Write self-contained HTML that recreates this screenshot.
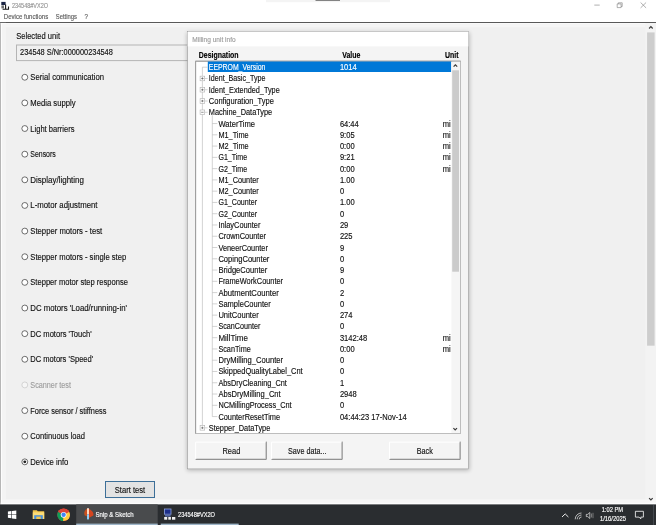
<!DOCTYPE html>
<html><head><meta charset="utf-8"><title>234548#VX2O</title>
<style>
html,body{margin:0;padding:0;}
body{width:656px;height:525px;overflow:hidden;background:#f0f0f0;}
svg{display:block;position:absolute;left:0;top:0;will-change:transform;font-family:"Liberation Sans",sans-serif;}
text{white-space:pre;stroke-width:0.14px}
</style></head><body>
<svg width="656" height="525" viewBox="0 0 656 525">
<rect x="0" y="0" width="656" height="22" fill="#fff"/>
<rect x="266" y="0" width="124" height="2.2" fill="#f4f4f4"/>
<rect x="315.5" y="0" width="24.5" height="0.9" fill="#777"/>
<text x="11.90" y="8" font-size="6.6" fill="#949494" stroke="#949494" textLength="36.10" lengthAdjust="spacingAndGlyphs">234548#VX2O</text>
<text x="3.80" y="19" font-size="6.9" fill="#5a5a5a" stroke="#5a5a5a" textLength="44.40" lengthAdjust="spacingAndGlyphs">Device functions</text>
<text x="55.80" y="19" font-size="6.9" fill="#5a5a5a" stroke="#5a5a5a" textLength="21.20" lengthAdjust="spacingAndGlyphs">Settings</text>
<text x="84.60" y="19" font-size="6.9" fill="#5a5a5a" stroke="#5a5a5a" textLength="3.45" lengthAdjust="spacingAndGlyphs">?</text>
<rect x="0" y="22" width="656" height="1.1" fill="#585858"/>
<rect x="0" y="22" width="0.7" height="482.4" fill="#707070"/>
<rect x="0.7" y="22.9" width="1.3" height="481.5" fill="#fdfdfd"/>
<rect x="2" y="22.9" width="4" height="476.5" fill="#f4f4f4"/>
<rect x="0.7" y="23.1" width="655.3" height="1.2" fill="#fcfcfc"/>
<rect x="2" y="24.3" width="643" height="3" fill="#f5f5f5"/>
<rect x="1.3" y="1.9" width="4.3" height="3.1" fill="#1b2545"/><rect x="1.4" y="5.4" width="2.6" height="3" fill="#6e6e6e"/><path d="M5.6 4.6V9.2M8.5 6.6V9.4M2.6 9.2H9" stroke="#151515" stroke-width="1.1" fill="none"/>
<path d="M594.3 5.1H599.7M617.2 3.9h3.9v3.7h-3.9zM618.3 3.9V2.8h3.9v3.7h-1.1M640.6 2.5L646.1 7.9M646.1 2.5L640.6 7.9" stroke="#7a7a7a" stroke-width="0.6" fill="none"/>
<text x="16.20" y="39" font-size="8.6" fill="#111" stroke="#111" textLength="43.80" lengthAdjust="spacingAndGlyphs">Selected unit</text>
<rect x="16.5" y="45" width="309" height="15.6" fill="#f0f0f0" stroke="#b4b4b4" stroke-width="1"/>
<text x="20.10" y="55" font-size="8.4" fill="#111" stroke="#111" textLength="92.70" lengthAdjust="spacingAndGlyphs">234548 S/Nr:000000234548</text>
<circle cx="24.8" cy="77.25" r="2.95" fill="#fff" stroke="#333" stroke-width="0.7"/>
<text x="30.30" y="80" font-size="8.4" fill="#111" stroke="#111" textLength="73.70" lengthAdjust="spacingAndGlyphs">Serial communication</text>
<circle cx="24.8" cy="102.89" r="2.95" fill="#fff" stroke="#333" stroke-width="0.7"/>
<text x="30.30" y="106" font-size="8.4" fill="#111" stroke="#111" textLength="45.20" lengthAdjust="spacingAndGlyphs">Media supply</text>
<circle cx="24.8" cy="128.53" r="2.95" fill="#fff" stroke="#333" stroke-width="0.7"/>
<text x="30.30" y="132" font-size="8.4" fill="#111" stroke="#111" textLength="44.20" lengthAdjust="spacingAndGlyphs">Light barriers</text>
<circle cx="24.8" cy="154.17" r="2.95" fill="#fff" stroke="#333" stroke-width="0.7"/>
<text x="30.30" y="157" font-size="8.4" fill="#111" stroke="#111" textLength="25.45" lengthAdjust="spacingAndGlyphs">Sensors</text>
<circle cx="24.8" cy="179.81" r="2.95" fill="#fff" stroke="#333" stroke-width="0.7"/>
<text x="30.30" y="183" font-size="8.4" fill="#111" stroke="#111" textLength="53.70" lengthAdjust="spacingAndGlyphs">Display/lighting</text>
<circle cx="24.8" cy="205.45" r="2.95" fill="#fff" stroke="#333" stroke-width="0.7"/>
<text x="30.30" y="208" font-size="8.4" fill="#111" stroke="#111" textLength="67.20" lengthAdjust="spacingAndGlyphs">L-motor adjustment</text>
<circle cx="24.8" cy="231.09" r="2.95" fill="#fff" stroke="#333" stroke-width="0.7"/>
<text x="30.30" y="234" font-size="8.4" fill="#111" stroke="#111" textLength="71.90" lengthAdjust="spacingAndGlyphs">Stepper motors - test</text>
<circle cx="24.8" cy="256.73" r="2.95" fill="#fff" stroke="#333" stroke-width="0.7"/>
<text x="30.30" y="260" font-size="8.4" fill="#111" stroke="#111" textLength="96.00" lengthAdjust="spacingAndGlyphs">Stepper motors - single step</text>
<circle cx="24.8" cy="282.37" r="2.95" fill="#fff" stroke="#333" stroke-width="0.7"/>
<text x="30.30" y="285" font-size="8.4" fill="#111" stroke="#111" textLength="97.70" lengthAdjust="spacingAndGlyphs">Stepper motor step response</text>
<circle cx="24.8" cy="308.01" r="2.95" fill="#fff" stroke="#333" stroke-width="0.7"/>
<text x="30.30" y="311" font-size="8.4" fill="#111" stroke="#111" textLength="96.70" lengthAdjust="spacingAndGlyphs">DC motors 'Load/running-in'</text>
<circle cx="24.8" cy="333.65" r="2.95" fill="#fff" stroke="#333" stroke-width="0.7"/>
<text x="30.30" y="337" font-size="8.4" fill="#111" stroke="#111" textLength="61.40" lengthAdjust="spacingAndGlyphs">DC motors 'Touch'</text>
<circle cx="24.8" cy="359.29" r="2.95" fill="#fff" stroke="#333" stroke-width="0.7"/>
<text x="30.30" y="362" font-size="8.4" fill="#111" stroke="#111" textLength="62.90" lengthAdjust="spacingAndGlyphs">DC motors 'Speed'</text>
<circle cx="24.8" cy="384.93" r="2.95" fill="#f6f6f6" stroke="#c6c6c6" stroke-width="0.7"/>
<text x="30.30" y="388" font-size="8.4" fill="#9d9d9d" stroke="#9d9d9d" textLength="40.70" lengthAdjust="spacingAndGlyphs">Scanner test</text>
<circle cx="24.8" cy="410.57" r="2.95" fill="#fff" stroke="#333" stroke-width="0.7"/>
<text x="30.30" y="414" font-size="8.4" fill="#111" stroke="#111" textLength="76.10" lengthAdjust="spacingAndGlyphs">Force sensor / stiffness</text>
<circle cx="24.8" cy="436.21" r="2.95" fill="#fff" stroke="#333" stroke-width="0.7"/>
<text x="30.30" y="439" font-size="8.4" fill="#111" stroke="#111" textLength="54.70" lengthAdjust="spacingAndGlyphs">Continuous load</text>
<circle cx="24.8" cy="461.85" r="2.95" fill="#fff" stroke="#333" stroke-width="0.7"/>
<circle cx="24.8" cy="461.85" r="1.45" fill="#222"/>
<text x="30.30" y="465" font-size="8.4" fill="#111" stroke="#111" textLength="38.10" lengthAdjust="spacingAndGlyphs">Device info</text>
<rect x="105.5" y="481.5" width="49" height="16" fill="#e3e3e3" stroke="#3d6f98" stroke-width="1"/>
<text x="114.80" y="493" font-size="8.4" fill="#111" stroke="#111" textLength="30.30" lengthAdjust="spacingAndGlyphs">Start test</text>
<rect x="645.5" y="23" width="10.5" height="480" fill="#f3f3f3"/>
<rect x="647.1" y="32.4" width="7.5" height="313.3" fill="#cdcdcd"/>
<rect x="2" y="499.2" width="654" height="3.5" fill="#f6f6f6"/>
<rect x="0.7" y="502.7" width="655.3" height="1.7" fill="#fdfdfd"/>
<path d="M649.1 28.5L650.9 26.7L652.7 28.5M649.1 498.2L650.9 500L652.7 498.2" stroke="#3a3a3a" stroke-width="1.2" fill="none"/>
<defs><filter id="sh" x="-10%" y="-10%" width="120%" height="120%"><feGaussianBlur stdDeviation="1.9"/></filter></defs>
<rect x="187" y="32.5" width="282.5" height="438" fill="#000" opacity="0.24" filter="url(#sh)"/>
<rect x="187.5" y="31.6" width="281" height="437.3" fill="#f4f4f4" stroke="#8c8c8c" stroke-width="0.5"/>
<rect x="187.7" y="31.8" width="280.6" height="14.6" fill="#fff"/>
<text x="192.30" y="42" font-size="6.9" fill="#9c9c9c" stroke="#9c9c9c" textLength="43.30" lengthAdjust="spacingAndGlyphs">Milling unit info</text>
<text x="198.80" y="58" font-size="8.2" fill="#000" stroke="#000" textLength="39.80" lengthAdjust="spacingAndGlyphs" font-weight="bold">Designation</text>
<text x="342.20" y="58" font-size="8.2" fill="#000" stroke="#000" textLength="18.20" lengthAdjust="spacingAndGlyphs" font-weight="bold">Value</text>
<text x="445.10" y="58" font-size="8.2" fill="#000" stroke="#000" textLength="13.50" lengthAdjust="spacingAndGlyphs" font-weight="bold">Unit</text>
<rect x="195.6" y="61.2" width="264.9" height="372.3" fill="#fff" stroke="#bdbdbd" stroke-width="1"/>
<path d="M195.6 433.5V61.2H460.5" fill="none" stroke="#9c9c9c" stroke-width="1"/>
<path d="M202.4 67.20V427.84M212.3 115.28V416.57" stroke="#b6b6b6" stroke-width="0.6" fill="none"/>
<rect x="207.8" y="61.5" width="243.4" height="10.5" fill="#0078d7"/>
<text x="208.80" y="70" font-size="8.2" fill="#fff" stroke="#fff" textLength="56.60" lengthAdjust="spacingAndGlyphs">EEPROM_Version</text>
<text x="339.90" y="70" font-size="8.2" fill="#fff" stroke="#fff" textLength="16.78" lengthAdjust="spacingAndGlyphs">1014</text>
<path d="M202.4 67.20H207.6" stroke="#b6b6b6" stroke-width="0.6"/>
<text x="208.80" y="81" font-size="8.2" fill="#111" stroke="#111" textLength="56.60" lengthAdjust="spacingAndGlyphs">Ident_Basic_Type</text>
<rect x="200.1" y="76.17" width="4.6" height="4.6" fill="#fff" stroke="#b0b0b0" stroke-width="0.6"/>
<path d="M201.2 78.47h2.4M202.4 77.27v2.4" stroke="#4a4a4a" stroke-width="0.6"/>
<path d="M204.9 78.47H207.6" stroke="#b6b6b6" stroke-width="0.6"/>
<text x="208.80" y="93" font-size="8.2" fill="#111" stroke="#111" textLength="70.90" lengthAdjust="spacingAndGlyphs">Ident_Extended_Type</text>
<rect x="200.1" y="87.44" width="4.6" height="4.6" fill="#fff" stroke="#b0b0b0" stroke-width="0.6"/>
<path d="M201.2 89.74h2.4M202.4 88.54v2.4" stroke="#4a4a4a" stroke-width="0.6"/>
<path d="M204.9 89.74H207.6" stroke="#b6b6b6" stroke-width="0.6"/>
<text x="208.80" y="104" font-size="8.2" fill="#111" stroke="#111" textLength="65.10" lengthAdjust="spacingAndGlyphs">Configuration_Type</text>
<rect x="200.1" y="98.71" width="4.6" height="4.6" fill="#fff" stroke="#b0b0b0" stroke-width="0.6"/>
<path d="M201.2 101.01h2.4M202.4 99.81v2.4" stroke="#4a4a4a" stroke-width="0.6"/>
<path d="M204.9 101.01H207.6" stroke="#b6b6b6" stroke-width="0.6"/>
<text x="208.80" y="115" font-size="8.2" fill="#111" stroke="#111" textLength="63.40" lengthAdjust="spacingAndGlyphs">Machine_DataType</text>
<rect x="200.1" y="109.98" width="4.6" height="4.6" fill="#fff" stroke="#b0b0b0" stroke-width="0.6"/>
<path d="M201.2 112.28h2.4" stroke="#4a4a4a" stroke-width="0.6"/>
<path d="M204.9 112.28H207.6" stroke="#b6b6b6" stroke-width="0.6"/>
<text x="218.40" y="127" font-size="8.2" fill="#111" stroke="#111" textLength="36.70" lengthAdjust="spacingAndGlyphs">WaterTime</text>
<text x="339.90" y="127" font-size="8.2" fill="#111" stroke="#111" textLength="18.88" lengthAdjust="spacingAndGlyphs">64:44</text>
<text x="442.70" y="127" font-size="8.2" fill="#111" stroke="#111" textLength="7.96" lengthAdjust="spacingAndGlyphs">mi</text>
<path d="M212.3 123.55H217.3" stroke="#b6b6b6" stroke-width="0.6"/>
<text x="218.40" y="138" font-size="8.2" fill="#111" stroke="#111" textLength="30.30" lengthAdjust="spacingAndGlyphs">M1_Time</text>
<text x="339.90" y="138" font-size="8.2" fill="#111" stroke="#111" textLength="14.68" lengthAdjust="spacingAndGlyphs">9:05</text>
<text x="442.70" y="138" font-size="8.2" fill="#111" stroke="#111" textLength="7.96" lengthAdjust="spacingAndGlyphs">mi</text>
<path d="M212.3 134.82H217.3" stroke="#b6b6b6" stroke-width="0.6"/>
<text x="218.40" y="149" font-size="8.2" fill="#111" stroke="#111" textLength="30.30" lengthAdjust="spacingAndGlyphs">M2_Time</text>
<text x="339.90" y="149" font-size="8.2" fill="#111" stroke="#111" textLength="14.68" lengthAdjust="spacingAndGlyphs">0:00</text>
<text x="442.70" y="149" font-size="8.2" fill="#111" stroke="#111" textLength="7.96" lengthAdjust="spacingAndGlyphs">mi</text>
<path d="M212.3 146.09H217.3" stroke="#b6b6b6" stroke-width="0.6"/>
<text x="218.40" y="160" font-size="8.2" fill="#111" stroke="#111" textLength="28.80" lengthAdjust="spacingAndGlyphs">G1_Time</text>
<text x="339.90" y="160" font-size="8.2" fill="#111" stroke="#111" textLength="14.68" lengthAdjust="spacingAndGlyphs">9:21</text>
<text x="442.70" y="160" font-size="8.2" fill="#111" stroke="#111" textLength="7.96" lengthAdjust="spacingAndGlyphs">mi</text>
<path d="M212.3 157.36H217.3" stroke="#b6b6b6" stroke-width="0.6"/>
<text x="218.40" y="172" font-size="8.2" fill="#111" stroke="#111" textLength="28.80" lengthAdjust="spacingAndGlyphs">G2_Time</text>
<text x="339.90" y="172" font-size="8.2" fill="#111" stroke="#111" textLength="14.68" lengthAdjust="spacingAndGlyphs">0:00</text>
<text x="442.70" y="172" font-size="8.2" fill="#111" stroke="#111" textLength="7.96" lengthAdjust="spacingAndGlyphs">mi</text>
<path d="M212.3 168.63H217.3" stroke="#b6b6b6" stroke-width="0.6"/>
<text x="218.40" y="183" font-size="8.2" fill="#111" stroke="#111" textLength="40.30" lengthAdjust="spacingAndGlyphs">M1_Counter</text>
<text x="339.90" y="183" font-size="8.2" fill="#111" stroke="#111" textLength="14.68" lengthAdjust="spacingAndGlyphs">1.00</text>
<path d="M212.3 179.90H217.3" stroke="#b6b6b6" stroke-width="0.6"/>
<text x="218.40" y="194" font-size="8.2" fill="#111" stroke="#111" textLength="40.30" lengthAdjust="spacingAndGlyphs">M2_Counter</text>
<text x="339.90" y="194" font-size="8.2" fill="#111" stroke="#111" textLength="4.20" lengthAdjust="spacingAndGlyphs">0</text>
<path d="M212.3 191.17H217.3" stroke="#b6b6b6" stroke-width="0.6"/>
<text x="218.40" y="205" font-size="8.2" fill="#111" stroke="#111" textLength="38.60" lengthAdjust="spacingAndGlyphs">G1_Counter</text>
<text x="339.90" y="205" font-size="8.2" fill="#111" stroke="#111" textLength="14.68" lengthAdjust="spacingAndGlyphs">1.00</text>
<path d="M212.3 202.44H217.3" stroke="#b6b6b6" stroke-width="0.6"/>
<text x="218.40" y="217" font-size="8.2" fill="#111" stroke="#111" textLength="38.60" lengthAdjust="spacingAndGlyphs">G2_Counter</text>
<text x="339.90" y="217" font-size="8.2" fill="#111" stroke="#111" textLength="4.20" lengthAdjust="spacingAndGlyphs">0</text>
<path d="M212.3 213.71H217.3" stroke="#b6b6b6" stroke-width="0.6"/>
<text x="218.40" y="228" font-size="8.2" fill="#111" stroke="#111" textLength="42.00" lengthAdjust="spacingAndGlyphs">InlayCounter</text>
<text x="339.90" y="228" font-size="8.2" fill="#111" stroke="#111" textLength="8.39" lengthAdjust="spacingAndGlyphs">29</text>
<path d="M212.3 224.98H217.3" stroke="#b6b6b6" stroke-width="0.6"/>
<text x="218.40" y="239" font-size="8.2" fill="#111" stroke="#111" textLength="47.60" lengthAdjust="spacingAndGlyphs">CrownCounter</text>
<text x="339.90" y="239" font-size="8.2" fill="#111" stroke="#111" textLength="12.59" lengthAdjust="spacingAndGlyphs">225</text>
<path d="M212.3 236.25H217.3" stroke="#b6b6b6" stroke-width="0.6"/>
<text x="218.40" y="251" font-size="8.2" fill="#111" stroke="#111" textLength="49.50" lengthAdjust="spacingAndGlyphs">VeneerCounter</text>
<text x="339.90" y="251" font-size="8.2" fill="#111" stroke="#111" textLength="4.20" lengthAdjust="spacingAndGlyphs">9</text>
<path d="M212.3 247.52H217.3" stroke="#b6b6b6" stroke-width="0.6"/>
<text x="218.40" y="262" font-size="8.2" fill="#111" stroke="#111" textLength="51.00" lengthAdjust="spacingAndGlyphs">CopingCounter</text>
<text x="339.90" y="262" font-size="8.2" fill="#111" stroke="#111" textLength="4.20" lengthAdjust="spacingAndGlyphs">0</text>
<path d="M212.3 258.79H217.3" stroke="#b6b6b6" stroke-width="0.6"/>
<text x="218.40" y="273" font-size="8.2" fill="#111" stroke="#111" textLength="48.90" lengthAdjust="spacingAndGlyphs">BridgeCounter</text>
<text x="339.90" y="273" font-size="8.2" fill="#111" stroke="#111" textLength="4.20" lengthAdjust="spacingAndGlyphs">9</text>
<path d="M212.3 270.06H217.3" stroke="#b6b6b6" stroke-width="0.6"/>
<text x="218.40" y="284" font-size="8.2" fill="#111" stroke="#111" textLength="64.70" lengthAdjust="spacingAndGlyphs">FrameWorkCounter</text>
<text x="339.90" y="284" font-size="8.2" fill="#111" stroke="#111" textLength="4.20" lengthAdjust="spacingAndGlyphs">0</text>
<path d="M212.3 281.33H217.3" stroke="#b6b6b6" stroke-width="0.6"/>
<text x="218.40" y="296" font-size="8.2" fill="#111" stroke="#111" textLength="60.40" lengthAdjust="spacingAndGlyphs">AbutmentCounter</text>
<text x="339.90" y="296" font-size="8.2" fill="#111" stroke="#111" textLength="4.20" lengthAdjust="spacingAndGlyphs">2</text>
<path d="M212.3 292.60H217.3" stroke="#b6b6b6" stroke-width="0.6"/>
<text x="218.40" y="307" font-size="8.2" fill="#111" stroke="#111" textLength="52.30" lengthAdjust="spacingAndGlyphs">SampleCounter</text>
<text x="339.90" y="307" font-size="8.2" fill="#111" stroke="#111" textLength="4.20" lengthAdjust="spacingAndGlyphs">0</text>
<path d="M212.3 303.87H217.3" stroke="#b6b6b6" stroke-width="0.6"/>
<text x="218.40" y="318" font-size="8.2" fill="#111" stroke="#111" textLength="40.30" lengthAdjust="spacingAndGlyphs">UnitCounter</text>
<text x="339.90" y="318" font-size="8.2" fill="#111" stroke="#111" textLength="12.59" lengthAdjust="spacingAndGlyphs">274</text>
<path d="M212.3 315.14H217.3" stroke="#b6b6b6" stroke-width="0.6"/>
<text x="218.40" y="329" font-size="8.2" fill="#111" stroke="#111" textLength="42.00" lengthAdjust="spacingAndGlyphs">ScanCounter</text>
<text x="339.90" y="329" font-size="8.2" fill="#111" stroke="#111" textLength="4.20" lengthAdjust="spacingAndGlyphs">0</text>
<path d="M212.3 326.41H217.3" stroke="#b6b6b6" stroke-width="0.6"/>
<text x="218.40" y="341" font-size="8.2" fill="#111" stroke="#111" textLength="29.50" lengthAdjust="spacingAndGlyphs">MillTime</text>
<text x="339.90" y="341" font-size="8.2" fill="#111" stroke="#111" textLength="27.27" lengthAdjust="spacingAndGlyphs">3142:48</text>
<text x="442.70" y="341" font-size="8.2" fill="#111" stroke="#111" textLength="7.96" lengthAdjust="spacingAndGlyphs">mi</text>
<path d="M212.3 337.68H217.3" stroke="#b6b6b6" stroke-width="0.6"/>
<text x="218.40" y="352" font-size="8.2" fill="#111" stroke="#111" textLength="32.40" lengthAdjust="spacingAndGlyphs">ScanTime</text>
<text x="339.90" y="352" font-size="8.2" fill="#111" stroke="#111" textLength="14.68" lengthAdjust="spacingAndGlyphs">0:00</text>
<text x="442.70" y="352" font-size="8.2" fill="#111" stroke="#111" textLength="7.96" lengthAdjust="spacingAndGlyphs">mi</text>
<path d="M212.3 348.95H217.3" stroke="#b6b6b6" stroke-width="0.6"/>
<text x="218.40" y="363" font-size="8.2" fill="#111" stroke="#111" textLength="64.70" lengthAdjust="spacingAndGlyphs">DryMilling_Counter</text>
<text x="339.90" y="363" font-size="8.2" fill="#111" stroke="#111" textLength="4.20" lengthAdjust="spacingAndGlyphs">0</text>
<path d="M212.3 360.22H217.3" stroke="#b6b6b6" stroke-width="0.6"/>
<text x="218.40" y="374" font-size="8.2" fill="#111" stroke="#111" textLength="84.30" lengthAdjust="spacingAndGlyphs">SkippedQualityLabel_Cnt</text>
<text x="339.90" y="374" font-size="8.2" fill="#111" stroke="#111" textLength="4.20" lengthAdjust="spacingAndGlyphs">0</text>
<path d="M212.3 371.49H217.3" stroke="#b6b6b6" stroke-width="0.6"/>
<text x="218.40" y="386" font-size="8.2" fill="#111" stroke="#111" textLength="68.50" lengthAdjust="spacingAndGlyphs">AbsDryCleaning_Cnt</text>
<text x="339.90" y="386" font-size="8.2" fill="#111" stroke="#111" textLength="4.20" lengthAdjust="spacingAndGlyphs">1</text>
<path d="M212.3 382.76H217.3" stroke="#b6b6b6" stroke-width="0.6"/>
<text x="218.40" y="397" font-size="8.2" fill="#111" stroke="#111" textLength="62.30" lengthAdjust="spacingAndGlyphs">AbsDryMilling_Cnt</text>
<text x="339.90" y="397" font-size="8.2" fill="#111" stroke="#111" textLength="16.78" lengthAdjust="spacingAndGlyphs">2948</text>
<path d="M212.3 394.03H217.3" stroke="#b6b6b6" stroke-width="0.6"/>
<text x="218.40" y="408" font-size="8.2" fill="#111" stroke="#111" textLength="73.20" lengthAdjust="spacingAndGlyphs">NCMillingProcess_Cnt</text>
<text x="339.90" y="408" font-size="8.2" fill="#111" stroke="#111" textLength="4.20" lengthAdjust="spacingAndGlyphs">0</text>
<path d="M212.3 405.30H217.3" stroke="#b6b6b6" stroke-width="0.6"/>
<text x="218.40" y="420" font-size="8.2" fill="#111" stroke="#111" textLength="61.70" lengthAdjust="spacingAndGlyphs">CounterResetTime</text>
<text x="339.90" y="420" font-size="8.2" fill="#111" stroke="#111" textLength="66.69" lengthAdjust="spacingAndGlyphs">04:44:23 17-Nov-14</text>
<path d="M212.3 416.57H217.3" stroke="#b6b6b6" stroke-width="0.6"/>
<text x="208.80" y="431" font-size="8.2" fill="#111" stroke="#111" textLength="61.50" lengthAdjust="spacingAndGlyphs">Stepper_DataType</text>
<rect x="200.1" y="425.54" width="4.6" height="4.6" fill="#fff" stroke="#b0b0b0" stroke-width="0.6"/>
<path d="M201.2 427.84h2.4M202.4 426.64v2.4" stroke="#4a4a4a" stroke-width="0.6"/>
<path d="M204.9 427.84H207.6" stroke="#b6b6b6" stroke-width="0.6"/>
<rect x="451.4" y="61.7" width="8.6" height="371.3" fill="#f5f5f5"/>
<rect x="452.2" y="70.3" width="6.8" height="201.4" fill="#cbcbcb"/>
<path d="M453.6 66.6L455.4 64.8L457.2 66.6M453.4 428.2L455.2 430L457 428.2" stroke="#3a3a3a" stroke-width="1.2" fill="none"/>
<rect x="195.6" y="441.6" width="71.2" height="18.3" fill="#f4f4f4"/>
<path d="M195.6 459.40000000000003V442.1H266.3" stroke="#fff" stroke-width="1" fill="none"/>
<path d="M265.6 442.6V458.70000000000005H196.6" stroke="#d6d6d6" stroke-width="0.7" fill="none"/>
<path d="M266.3 441.6V459.40000000000003H195.6" stroke="#5a5a5a" stroke-width="0.7" fill="none"/>
<text x="222.50" y="454" font-size="8.4" fill="#111" stroke="#111" textLength="17.80" lengthAdjust="spacingAndGlyphs">Read</text>
<rect x="271.5" y="441.6" width="71.2" height="18.3" fill="#f4f4f4"/>
<path d="M271.5 459.40000000000003V442.1H342.2" stroke="#fff" stroke-width="1" fill="none"/>
<path d="M341.5 442.6V458.70000000000005H272.5" stroke="#d6d6d6" stroke-width="0.7" fill="none"/>
<path d="M342.2 441.6V459.40000000000003H271.5" stroke="#5a5a5a" stroke-width="0.7" fill="none"/>
<text x="288.00" y="454" font-size="8.4" fill="#111" stroke="#111" textLength="38.40" lengthAdjust="spacingAndGlyphs">Save data...</text>
<rect x="389.5" y="441.6" width="71.2" height="18.3" fill="#f4f4f4"/>
<path d="M389.5 459.40000000000003V442.1H460.2" stroke="#fff" stroke-width="1" fill="none"/>
<path d="M459.5 442.6V458.70000000000005H390.5" stroke="#d6d6d6" stroke-width="0.7" fill="none"/>
<path d="M460.2 441.6V459.40000000000003H389.5" stroke="#5a5a5a" stroke-width="0.7" fill="none"/>
<text x="416.80" y="454" font-size="8.4" fill="#111" stroke="#111" textLength="16.00" lengthAdjust="spacingAndGlyphs">Back</text>
<rect x="0" y="504.4" width="656" height="20.6" fill="#2a2d30"/>
<rect x="76.2" y="504.4" width="81.5" height="20.6" fill="#494b4d"/>
<rect x="76.2" y="523.6" width="81.5" height="1.4" fill="#9fb6c9"/>
<rect x="160.7" y="523.6" width="78" height="1.4" fill="#9fb6c9"/>
<text x="95.50" y="517" font-size="6.6" fill="#fff" stroke="#fff" textLength="38.20" lengthAdjust="spacingAndGlyphs">Snip &amp; Sketch</text>
<text x="178.00" y="517" font-size="6.6" fill="#fff" stroke="#fff" textLength="37.00" lengthAdjust="spacingAndGlyphs">234548#VX2O</text>
<text x="601.70" y="512" font-size="6.4" fill="#fff" stroke="#fff" textLength="21.30" lengthAdjust="spacingAndGlyphs">1:02 PM</text>
<text x="600.00" y="521" font-size="6.4" fill="#fff" stroke="#fff" textLength="26.00" lengthAdjust="spacingAndGlyphs">1/16/2025</text>
<path d="M7.9 511.6L11.4 511.1V514.4H7.9zM12 511L16.3 510.4V514.4H12zM7.9 515H11.4V518.3L7.9 517.8zM12 515H16.3V519L12 518.4z" fill="#fff"/>
<path d="M32.8 510.2h4l1 1.1h6.4v7.7H32.8z" fill="#f3c64b"/><rect x="32.8" y="512.3" width="11.4" height="6.7" fill="#fbdc78"/><rect x="34.2" y="515.2" width="8.6" height="3.8" fill="#4a90d9"/><rect x="36.3" y="516.6" width="4.4" height="2.4" fill="#f3c64b"/>
<circle cx="63.6" cy="514.8" r="6.3" fill="#db4437"/>
<path d="M63.6 514.8L58.1 511.7A6.3 6.3 0 0 0 63.2 521.1z" fill="#0f9d58"/>
<path d="M63.6 514.8L63.2 521.1A6.3 6.3 0 0 0 69.1 511.7z" fill="#ffcd40"/>
<path d="M63.6 514.8L69.1 511.7A6.3 6.3 0 0 0 58.1 511.7z" fill="#db4437"/>
<circle cx="63.6" cy="514.8" r="2.9" fill="#fff"/><circle cx="63.6" cy="514.8" r="2.2" fill="#4285f4"/>
<path d="M87.3 508.6C84.6 510 83.6 512.8 84.6 515.2L87.3 516.4z" fill="#c8501f"/><path d="M88.7 508.8C91.6 510 93.8 512.6 93.4 515.4L88.7 518z" fill="#d4451f"/>
<rect x="87" y="508.2" width="2" height="6" fill="#ffd9c0"/><path d="M87 514.2h2v4.4l-1 1.6-1-1.6z" fill="#8fcdf7"/>
<rect x="164.4" y="509" width="6.6" height="5.2" fill="#1d2f8a" stroke="#8fa5e0" stroke-width="0.8"/><rect x="165" y="514.4" width="5.6" height="2.2" fill="#5468a8"/>
<rect x="164.2" y="517" width="3" height="2.7" fill="#f0f0f0"/><rect x="168.3" y="517" width="2.6" height="2.7" fill="#f0f0f0"/><rect x="172" y="517" width="3.3" height="2.7" fill="#f0f0f0"/>
<path d="M562 517L565.2 513.9L568.4 517" stroke="#fff" stroke-width="0.9" fill="none"/>
<path d="M575.2 519.3A6.3 6.3 0 0 1 581.5 513M577.2 519.3A4.3 4.3 0 0 1 581.5 515M579.2 519.3A2.3 2.3 0 0 1 581.5 517" stroke="#d8d8d8" stroke-width="0.8" fill="none"/>
<path d="M586.3 514.4h1.5l2-1.9v6l-2-1.9h-1.5z" stroke="#e8e8e8" stroke-width="0.7" fill="none"/><path d="M591.5 513.5v4M593 512.8v5.4" stroke="#aaa" stroke-width="0.6" fill="none"/>
<path d="M635.4 511.3h8v5.8h-2.6v1.8l-1.8-1.8h-3.6z" stroke="#fff" stroke-width="0.8" fill="none"/>
<path d="M653.5 505v20" stroke="#555c63" stroke-width="0.6" fill="none"/>
</svg>
</body></html>
